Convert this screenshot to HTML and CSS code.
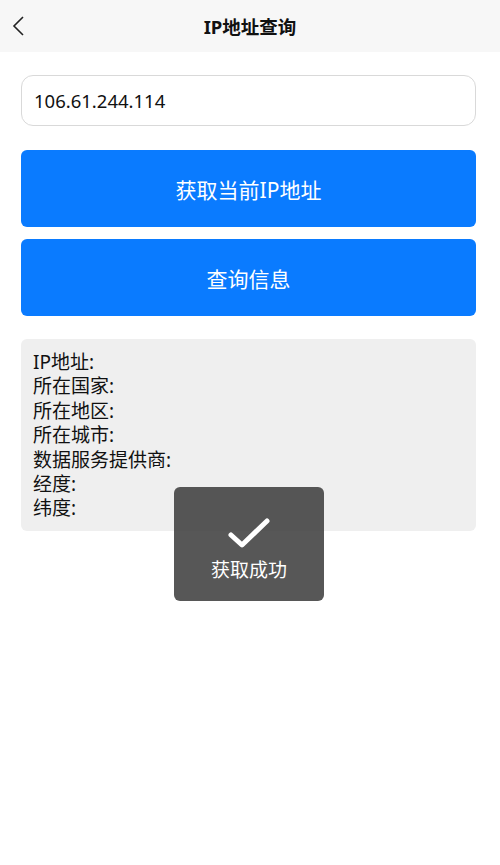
FILE: index.html
```html
<!DOCTYPE html>
<html lang="zh-CN">
    <head>
        <meta charset="UTF-8" />
        <meta name="viewport" content="width=device-width, initial-scale=1.0" />
        <title>IP地址查询</title>
        <link rel="stylesheet" href="styles.css">
    </head>
    <body>
        <header class="nav-bar">
            <span class="back-btn">
                <svg width="14" height="24" viewBox="0 0 14 24">
                    <path d="M11 3 L2 12 L11 21" fill="none" stroke="#222" stroke-width="1.6" />
                </svg>
            </span>
            <h1>IP地址查询</h1>
        </header>

        <div class="container">
            <input type="text" class="ip-input" value="106.61.244.114" />
            <button class="main-btn">获取当前IP地址</button>
            <button class="main-btn">查询信息</button>

            <div class="info-box">
                <div>IP地址:</div>
                <div>所在国家:</div>
                <div>所在地区:</div>
                <div>所在城市:</div>
                <div>数据服务提供商:</div>
                <div>经度:</div>
                <div>纬度:</div>
            </div>
        </div>

        <!-- toast -->
        <div class="toast">
            <svg width="44" height="34" viewBox="0 0 44 34">
                <path d="M4 18 L15 28 L40 4" fill="none" stroke="#fff" stroke-width="5" stroke-linecap="round" stroke-linejoin="round" />
            </svg>
            <p>获取成功</p>
        </div>
    </body>
</html>
```

FILE: styles.css
```css
body {
    font-family: "Noto Sans", "Noto Sans CJK SC", sans-serif;
    background-color: #fff;
    margin: 0;
    padding: 0;
    color: #111;
}
.nav-bar {
    background-color: #f7f7f7;
    height: 52px;
    display: flex;
    align-items: center;
    justify-content: center;
    position: relative;
}
.nav-bar h1 {
    margin: 0;
    font-size: 18.5px;
    font-weight: bold;
    color: #111;
}
.back-btn {
    position: absolute;
    left: 12px;
    top: 14px;
}
.container {
    padding: 23px 24px 0 21px;
    display: flex;
    flex-direction: column;
}
.ip-input {
    height: 51px;
    box-sizing: border-box;
    border: 1px solid #d9d9d9;
    border-radius: 12px;
    padding: 0 12px;
    font-family: inherit;
    font-size: 18.5px;
    color: #111;
    outline: none;
}
.main-btn {
    height: 77px;
    margin-top: 12px;
    background-color: #0a7bff;
    color: white;
    border: none;
    border-radius: 6px;
    font-family: inherit;
    font-size: 21px;
    cursor: pointer;
}
.ip-input + .main-btn {
    margin-top: 24px;
}
.info-box {
    margin-top: 23px;
    background-color: #efefef;
    border-radius: 6px;
    padding: 11px 12px 11px 12px;
    font-size: 19px;
    line-height: 24.4px;
    height: 170px;
}
.toast {
    position: absolute;
    left: 174px;
    top: 487px;
    width: 150px;
    height: 114px;
    box-sizing: border-box;
    background: rgba(64, 64, 64, 0.88);
    border-radius: 6px;
    display: flex;
    flex-direction: column;
    align-items: center;
    padding-top: 30px;
    color: white;
}
.toast p {
    margin: 6px 0 0;
    font-size: 19px;
    line-height: 26px;
}
```
